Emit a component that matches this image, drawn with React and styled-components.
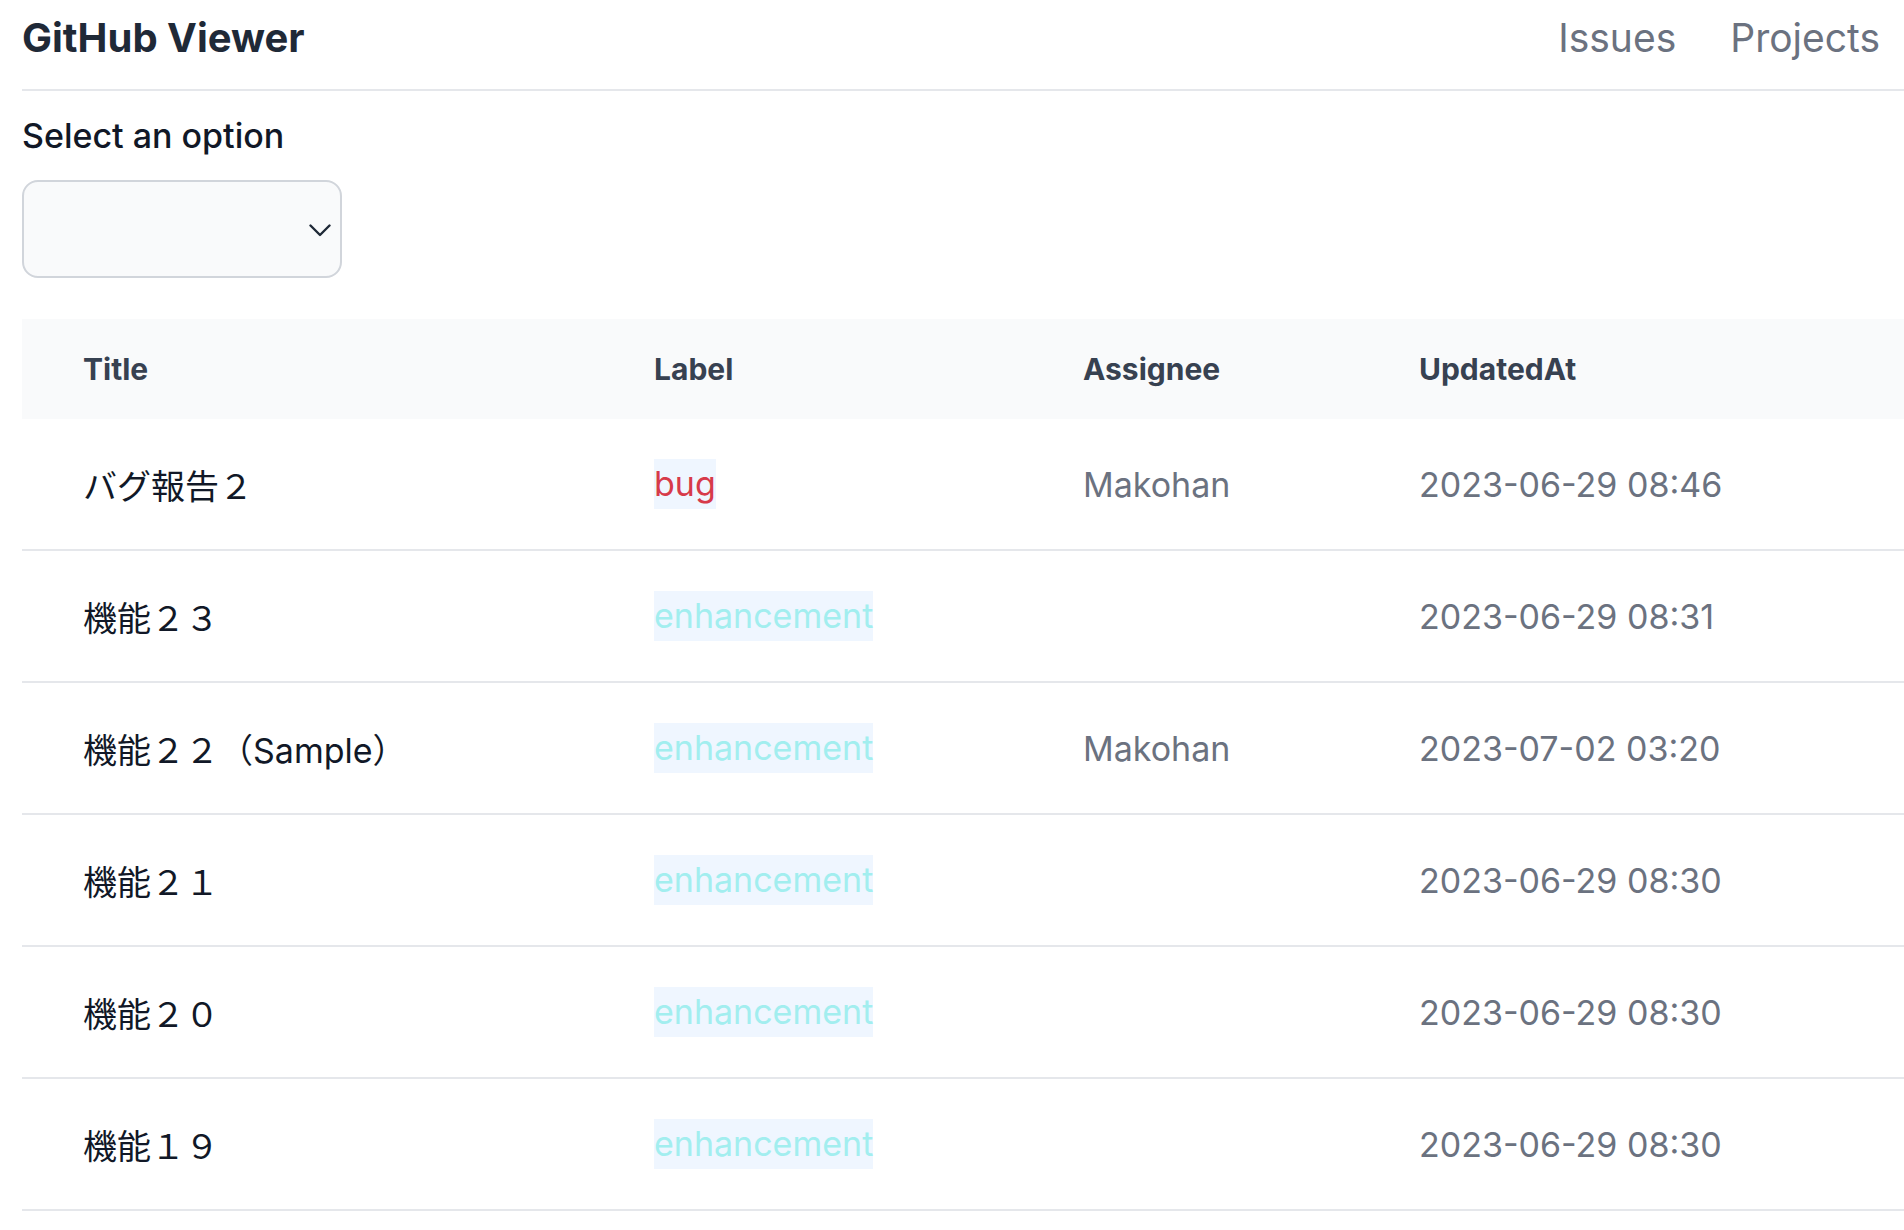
import React from "react";
import styled, { createGlobalStyle } from "styled-components";

const GlobalStyle = createGlobalStyle`
  body {
    margin: 0;
    background: #fff;
    font-family: Inter, "Noto Sans CJK JP", sans-serif;
    color: #111827;
  }
`;

const Page = styled.div`
  padding-left: 22px;
`;

const Header = styled.header`
  display: flex;
  justify-content: space-between;
  align-items: center;
  padding: 10px 24px 23px 0;
  border-bottom: 2px solid #e5e7eb;
`;

const Brand = styled.h1`
  margin: 0;
  font-size: 40px;
  line-height: 56px;
  font-weight: 700;
  color: #1f2937;
`;

const Nav = styled.nav`
  display: flex;
  gap: 54px;
`;

const NavLink = styled.a`
  font-size: 39px;
  line-height: 56px;
  color: #6b7280;
  text-decoration: none;
  cursor: pointer;
`;

const Filter = styled.div`
  padding-top: 21px;
`;

const FilterLabel = styled.label`
  display: block;
  font-size: 34px;
  line-height: 48px;
  font-weight: 500;
  color: #111827;
  margin-bottom: 20px;
`;

const SelectBox = styled.div`
  position: relative;
  width: 320px;
  height: 98px;
  box-sizing: border-box;
  border: 2px solid #d1d5db;
  border-radius: 16px;
  background: #f9fafb;
  & > svg {
    position: absolute;
    right: 9px;
    top: 42px;
  }
`;

const Table = styled.table`
  margin-top: 41px;
  width: 100%;
  border-collapse: collapse;
  table-layout: fixed;
`;

const HeadRow = styled.tr`
  background: #f9fafb;
`;

const Th = styled.th`
  box-sizing: border-box;
  width: ${(p) => p.$w || "auto"};
  height: 100px;
  padding: 0 0 0 61px;
  text-align: left;
  font-size: 30px;
  font-weight: 700;
  color: #374151;
`;

const Row = styled.tr`
  border-bottom: 2px solid #e5e7eb;
`;

const Td = styled.td`
  height: 130px;
  padding: 0 0 0 61px;
  font-size: 34px;
  color: ${(p) => (p.$muted ? "#6b7280" : "#111827")};
  white-space: nowrap;
`;

const Label = styled.span`
  display: inline-block;
  line-height: 50px;
  background: #eff6ff;
  color: ${(p) => p.$color};
`;

const issues = [
  { title: "バグ報告２", label: "bug", color: "d73a4a", assignee: "Makohan", updated: "2023-06-29 08:46" },
  { title: "機能２３", label: "enhancement", color: "a2eeef", assignee: "", updated: "2023-06-29 08:31" },
  { title: "機能２２（Sample）", label: "enhancement", color: "a2eeef", assignee: "Makohan", updated: "2023-07-02 03:20" },
  { title: "機能２１", label: "enhancement", color: "a2eeef", assignee: "", updated: "2023-06-29 08:30" },
  { title: "機能２０", label: "enhancement", color: "a2eeef", assignee: "", updated: "2023-06-29 08:30" },
  { title: "機能１９", label: "enhancement", color: "a2eeef", assignee: "", updated: "2023-06-29 08:30" },
];

export default function App() {
  return (
    <>
      <GlobalStyle />
      <Page>
        <Header>
          <Brand>GitHub Viewer</Brand>
          <Nav>
            <NavLink>Issues</NavLink>
            <NavLink>Projects</NavLink>
          </Nav>
        </Header>
        <Filter>
          <FilterLabel>Select an option</FilterLabel>
          <SelectBox>
            <svg width="22" height="13" viewBox="0 0 22 13" fill="none">
              <polyline
                points="1.5,1.5 11,11 20.5,1.5"
                stroke="#1f2937"
                strokeWidth="2.4"
                strokeLinecap="round"
                strokeLinejoin="round"
              />
            </svg>
          </SelectBox>
        </Filter>
        <Table>
          <thead>
            <HeadRow>
              <Th $w="571px">Title</Th>
              <Th $w="429px">Label</Th>
              <Th $w="336px">Assignee</Th>
              <Th>UpdatedAt</Th>
            </HeadRow>
          </thead>
          <tbody>
            {issues.map((it, i) => (
              <Row key={i}>
                <Td>{it.title}</Td>
                <Td>
                  <Label $color={`#${it.color}`}>{it.label}</Label>
                </Td>
                <Td $muted>{it.assignee}</Td>
                <Td $muted>{it.updated}</Td>
              </Row>
            ))}
          </tbody>
        </Table>
      </Page>
    </>
  );
}
